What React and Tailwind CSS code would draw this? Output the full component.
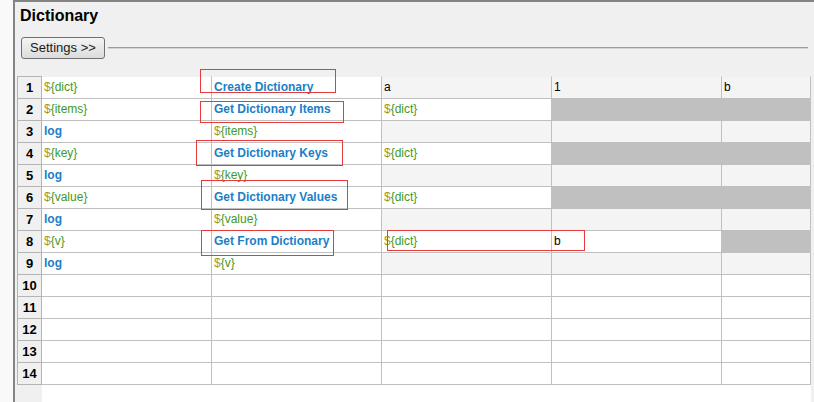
import React from "react";

const F = { fontFamily: '"Liberation Sans", Arial, sans-serif' };

function Var({ t }) {
  return (
    <span className="text-[#3f9826]">
      <span className="text-[#a39a10]">$</span>
      {t.slice(1)}
    </span>
  );
}

function Cell({ kind, text, bg, first, span }) {
  const bgc =
    bg === "g" ? "bg-[#c0c0c0]" : bg === "l" ? "bg-[#f4f4f4]" : "bg-white";
  return (
    <div
      className={`${bgc} ${span ? "col-span-2" : ""} ${
        first ? "h-[23px] border-t border-t-[#f0f0f0]" : "h-[22px]"
      } border-r border-b border-[#c0c0c0] pl-[2px] text-[12px] leading-[21px] whitespace-nowrap overflow-hidden`}
    >
      {kind === "v" && <Var t={text} />}
      {kind === "k" && (
        <span className="font-bold text-[#1b7fc6]">{text}</span>
      )}
      {kind === "t" && <span className="text-black">{text}</span>}
    </div>
  );
}

const rows = [
  [["v", "${dict}", "w"], ["k", "Create Dictionary", "w"], ["t", "a", "l"], ["t", "1", "l"], ["t", "b", "l"]],
  [["v", "${items}", "w"], ["k", "Get Dictionary Items", "w"], ["v", "${dict}", "w"], ["", "", "g", true]],
  [["k", "log", "w"], ["v", "${items}", "w"], ["", "", "l"], ["", "", "l"], ["", "", "l"]],
  [["v", "${key}", "w"], ["k", "Get Dictionary Keys", "w"], ["v", "${dict}", "w"], ["", "", "g", true]],
  [["k", "log", "w"], ["v", "${key}", "w"], ["", "", "l"], ["", "", "l"], ["", "", "l"]],
  [["v", "${value}", "w"], ["k", "Get Dictionary Values", "w"], ["v", "${dict}", "w"], ["", "", "g", true]],
  [["k", "log", "w"], ["v", "${value}", "w"], ["", "", "l"], ["", "", "l"], ["", "", "l"]],
  [["v", "${v}", "w"], ["k", "Get From Dictionary", "w"], ["v", "${dict}", "w"], ["t", "b", "w"], ["", "", "g"]],
  [["k", "log", "w"], ["v", "${v}", "w"], ["", "", "l"], ["", "", "l"], ["", "", "l"]],
];
for (let i = 0; i < 5; i++) {
  rows.push([["", "", "w"], ["", "", "w"], ["", "", "w"], ["", "", "w"], ["", "", "w"]]);
}

const boxes = [
  "left-[200px] top-[69px] w-[136px] h-[24px]",
  "left-[200px] top-[101px] w-[144px] h-[22px]",
  "left-[196px] top-[140px] w-[147px] h-[26px]",
  "left-[201px] top-[180px] w-[147px] h-[30px]",
  "left-[201px] top-[230px] w-[133px] h-[26px]",
  "left-[387px] top-[230px] w-[198px] h-[21px]",
];

export default function App() {
  return (
    <div
      className="relative w-[814px] h-[402px] flex overflow-hidden bg-[#f9f9f9]"
      style={F}
    >
      <div className="w-[13px] shrink-0 bg-[#f9f9f9]" />
      <div className="flex-1 flex flex-col border-l-2 border-t-2 border-[#848484] bg-[#f0f0f0]">
        <div className="pl-[5px] pt-[4px] text-[16px] leading-[20px] font-bold text-black">
          Dictionary
        </div>
        <div className="mt-[11px] flex items-center">
          <button className="ml-[6px] w-[84px] h-[22px] rounded-[3px] border border-[#707070] bg-gradient-to-b from-[#f4f4f4] to-[#dcdcdc] text-[13px] leading-[20px] text-[#1a1a1a]">
            Settings &gt;&gt;
          </button>
          <div className="ml-[3px] mr-[6px] flex-1 flex flex-col">
            <div className="h-px bg-[#9c9c9c]" />
            <div className="h-px bg-[#d4d4d4]" />
          </div>
        </div>
        <div className="mt-[17px] ml-[2px] w-[794px] grid grid-cols-[25px_170px_170px_170px_170px_89px]">
          {rows.map((r, i) => (
            <React.Fragment key={i}>
              <div
                className={`${
                  i === 0 ? "h-[23px] border-t" : "h-[22px]"
                } border-l border-r border-b border-[#b4b4b4] bg-[#f0f0f0] text-center text-[13px] leading-[21px] font-bold text-black`}
              >
                {i + 1}
              </div>
              {r.map((c, j) => (
                <Cell
                  key={j}
                  kind={c[0]}
                  text={c[1]}
                  bg={c[2]}
                  span={c[3]}
                  first={i === 0}
                />
              ))}
            </React.Fragment>
          ))}
        </div>
        <div className="flex-1 ml-[2px] w-[794px] flex">
          <div className="w-[25px] bg-[#f0f0f0]" />
          <div className="flex-1 bg-white" />
        </div>
      </div>
      {boxes.map((b, i) => (
        <div
          key={i}
          className={`absolute ${b} border border-[#e53b3b] pointer-events-none`}
        />
      ))}
    </div>
  );
}
